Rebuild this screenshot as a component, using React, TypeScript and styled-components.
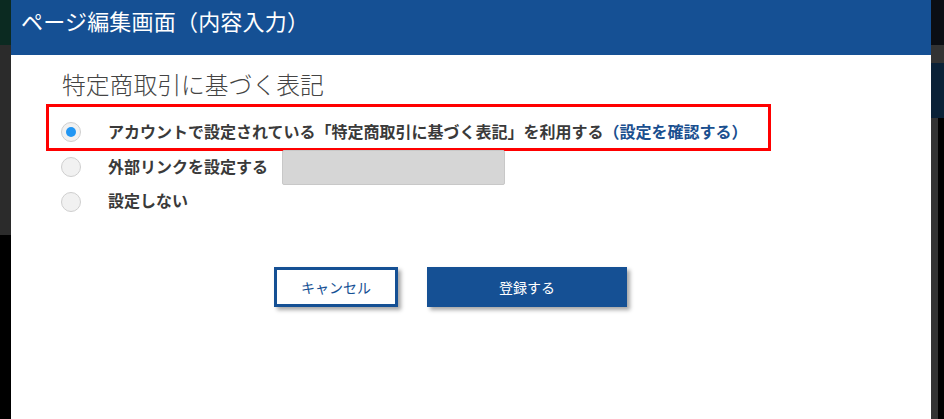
import React from "react";
import styled, { createGlobalStyle } from "styled-components";

const Global = createGlobalStyle`
  html, body { margin: 0; padding: 0; background: #000; }
  body { font-family: "Noto Sans CJK JP", "Noto Sans", sans-serif; }
  * { box-sizing: border-box; }
`;

const Page = styled.div`
  display: flex;
  width: 944px;
  height: 419px;
  overflow: hidden;
`;

const Strip = styled.div<{ $w: number }>`
  width: ${(p) => p.$w}px;
  flex: none;
  display: flex;
  flex-direction: column;
  overflow: hidden;
`;

const Block = styled.div<{ $h?: number; $bg: string }>`
  height: ${(p) => (p.$h ? `${p.$h}px` : "auto")};
  flex: ${(p) => (p.$h ? "none" : "1")};
  background: ${(p) => p.$bg};
  display: flex;
`;

const BlockPart = styled.div<{ $w?: number; $bg: string }>`
  width: ${(p) => (p.$w ? `${p.$w}px` : "auto")};
  flex: ${(p) => (p.$w ? "none" : "1")};
  background: ${(p) => p.$bg};
`;

const Modal = styled.div`
  width: 920px;
  flex: none;
  background: #fff;
  display: flex;
  flex-direction: column;
`;

const Header = styled.div`
  height: 55px;
  background: #155094;
  padding: 6px 0 0 10px;
`;

const Title = styled.h1`
  margin: 0;
  color: #fff;
  font-size: 22px;
  line-height: 28px;
  font-weight: 400;
  letter-spacing: 0.2px;
`;

const Body = styled.div`
  padding: 13px 0 0 50px;
  display: flex;
  flex-direction: column;
`;

const Heading = styled.h2`
  margin: 0 0 15px 1px;
  font-size: 23.8px;
  line-height: 32px;
  font-weight: 300;
  color: #444;
`;

const OptionRow = styled.div<{ $h: number }>`
  position: relative;
  display: flex;
  align-items: center;
  height: ${(p) => p.$h}px;
`;

const Annotation = styled.div`
  position: absolute;
  left: -15px;
  top: -11px;
  width: 725px;
  height: 47px;
  border: 3px solid #ff0000;
  pointer-events: none;
`;

const Radio = styled.span<{ $checked?: boolean }>`
  width: 20px;
  height: 20px;
  flex: none;
  border-radius: 50%;
  background: #f1f1f1;
  border: 1px solid #cfcfcf;
  display: flex;
  align-items: center;
  justify-content: center;
  &::after {
    content: "";
    display: ${(p) => (p.$checked ? "block" : "none")};
    width: 10px;
    height: 10px;
    border-radius: 50%;
    background: #2196f3;
  }
`;

const Label = styled.span`
  margin-left: 27px;
  margin-top: -3px;
  font-size: 16px;
  line-height: 22px;
  font-weight: 700;
  color: #3a3a3a;
  white-space: nowrap;
`;

const LinkText = styled.span`
  color: #1a4f8f;
`;

const UrlInput = styled.div`
  margin-left: 14px;
  width: 223px;
  height: 35px;
  background: #d6d6d6;
  border: 1px solid #c8c8c8;
  border-radius: 2px;
`;

const Buttons = styled.div`
  display: flex;
  gap: 29px;
  margin-top: 49px;
  padding-left: 213px;
`;

const Button = styled.div<{ $primary?: boolean; $w: number }>`
  width: ${(p) => p.$w}px;
  height: 40px;
  display: flex;
  align-items: center;
  justify-content: center;
  font-size: 14px;
  font-weight: 400;
  background: ${(p) => (p.$primary ? "#155094" : "#fff")};
  color: ${(p) => (p.$primary ? "#fff" : "#155094")};
  border: ${(p) => (p.$primary ? "none" : "3px solid #155094")};
  box-shadow: 3px 3px 4px rgba(0, 0, 0, 0.35);
`;

export default function App() {
  return (
    <>
      <Global />
      <Page>
        <Strip $w={11}>
          <Block $h={45} $bg="#0b2a21" />
          <Block $h={190} $bg="#2b2b2b" />
          <Block $bg="#000" />
        </Strip>
        <Modal>
          <Header>
            <Title>ページ編集画面（内容入力）</Title>
          </Header>
          <Body>
            <Heading>特定商取引に基づく表記</Heading>
            <OptionRow $h={34}>
              <Annotation />
              <Radio $checked />
              <Label>
                アカウントで設定されている「特定商取引に基づく表記」を利用する
                <LinkText>（設定を確認する）</LinkText>
              </Label>
            </OptionRow>
            <OptionRow $h={36}>
              <Radio />
              <Label>外部リンクを設定する</Label>
              <UrlInput />
            </OptionRow>
            <OptionRow $h={33}>
              <Radio />
              <Label>設定しない</Label>
            </OptionRow>
            <Buttons>
              <Button $w={124}>キャンセル</Button>
              <Button $w={200} $primary>
                登録する
              </Button>
            </Buttons>
          </Body>
        </Modal>
        <Strip $w={13}>
          <Block $h={45} $bg="#0b0e14" />
          <Block $h={18} $bg="#333" />
          <Block $h={55} $bg="#0a2137" />
          <Block $bg="#333">
            <BlockPart $w={7} $bg="#333" />
            <BlockPart $bg="#000" />
          </Block>
        </Strip>
      </Page>
    </>
  );
}
